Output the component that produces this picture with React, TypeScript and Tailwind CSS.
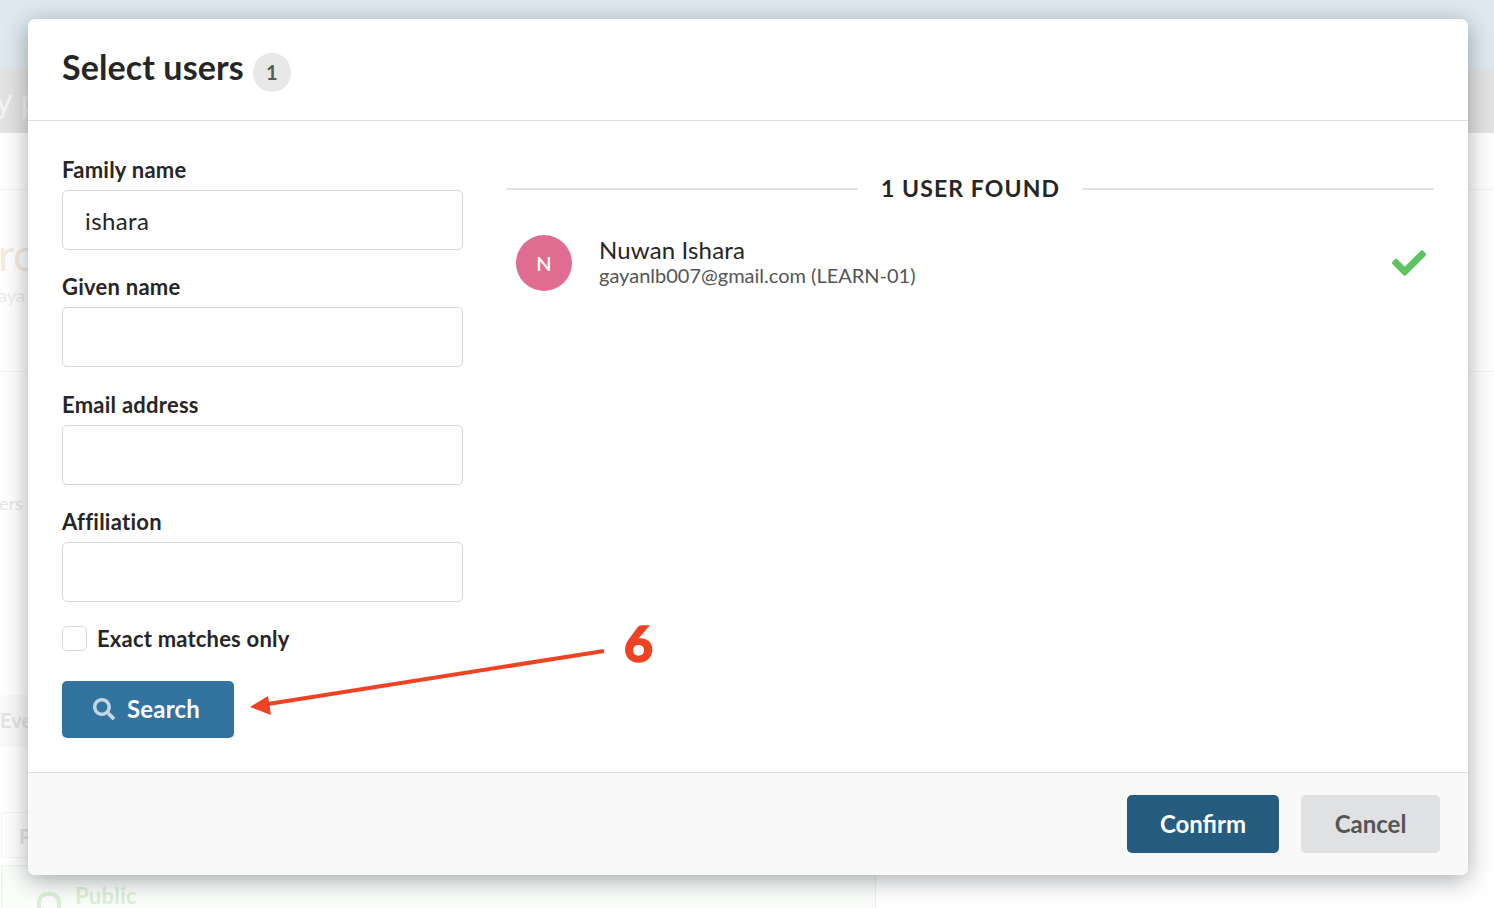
import { FaSearch, FaCheck } from "react-icons/fa";

const fields = [
  { label: "Family name", value: "ishara" },
  { label: "Given name", value: "" },
  { label: "Email address", value: "" },
  { label: "Affiliation", value: "" },
];

function BackgroundPage() {
  return (
    <div className="h-[908px] overflow-hidden bg-white text-[#d9d9d9]">
      <div className="h-[68px] bg-[#dfe9f0]" />
      <div className="h-[65px] bg-[#e3e3e3] pt-[12px] text-[34px] leading-[40px] text-[#f4f4f4]">
        <span className="-ml-[5px] block">y p</span>
      </div>
      <div className="h-[57px] border-b border-[#f4f4f4]" />
      <div className="h-[182px] border-b border-[#f6f6f6] pt-[38px]">
        <div className="-ml-[2px] text-[44px] leading-[52px] text-[#f5ebe2]">rc</div>
        <div className="-ml-[2px] mt-[3px] text-[18px] leading-[24px] text-[#ececec]">aya</div>
      </div>
      <div className="h-[323px] pt-[119px]">
        <div className="-ml-[1px] text-[18px] leading-[24px] text-[#e8e8e8]">ers</div>
      </div>
      <div className="h-[52px] w-[60px] rounded-l bg-[#fafafa] pt-[11px] text-[20px] font-bold leading-[28px] text-[#e4e4e4]">
        Eve
      </div>
      <div className="ml-[1px] mt-[65px] flex w-[875px] flex-col">
        <div className="h-[46px] rounded border border-[#f5f5f5] pl-[17px] pt-[8px] text-[20px] font-bold text-[#e4e4e4]">P</div>
        <div className="mt-[7px] flex h-[60px] gap-[14px] rounded border border-[#e9f3e7] bg-[#fbfdfa] pl-[35px] pt-[19px]">
          <div className="mt-[7px] h-[30px] w-[24px] rounded-t-[10px] border-[4px] border-[#dcefd8]" />
          <span className="text-[22px] font-bold leading-[22px] tracking-[0.3px] text-[#dcefd8]">Public</span>
        </div>
      </div>
    </div>
  );
}

function Field({ label, value }: { label: string; value: string }) {
  return (
    <div className="flex flex-col">
      <label className="h-[36px] text-[22px] font-bold leading-[31px] tracking-[0.25px] text-[#262626]">{label}</label>
      <input
        readOnly
        value={value}
        className="h-[60px] w-[401px] rounded-[5px] border border-[#d9d9d9] bg-white px-[22px] text-[24px] tracking-[0.4px] text-[#262626]"
      />
    </div>
  );
}

export default function App() {
  return (
    <div className="relative h-[908px] w-[1494px] overflow-hidden font-['Lato','Liberation_Sans',sans-serif]">
      <BackgroundPage />

      <div className="absolute left-[28px] top-[19px] flex h-[856px] w-[1440px] flex-col rounded-[7px] bg-white shadow-[0_5px_25px_rgba(20,30,40,0.38)]">
        <header className="flex h-[102px] items-start gap-[9px] border-b border-[#dedede] pl-[34px] pt-[26px]">
          <h1 className="text-[34px] font-bold leading-[44px] tracking-[0.1px] text-[#262626]">Select users</h1>
          <span className="mt-[8px] flex h-[39px] w-[38px] items-center justify-center rounded-full bg-[#e8e8e8] pb-[1px] text-[20px] font-bold text-[#5a5a5a]">
            1
          </span>
        </header>

        <div className="flex flex-1 px-[34px]">
          <form className="flex w-[401px] flex-col pt-[33px]">
            <div className="flex flex-col gap-[21.33px]">
              {fields.map((field) => (
                <Field key={field.label} label={field.label} value={field.value} />
              ))}
            </div>
            <label className="mt-[25px] flex h-[24px] items-center gap-[10px] text-[22px] font-bold tracking-[0.2px] text-[#262626]">
              <span className="h-[25px] w-[25px] rounded-[5px] border border-[#d9d9d9] bg-white" />
              Exact matches only
            </label>
            <button
              type="button"
              className="mt-[30px] flex h-[57px] w-[172px] items-center gap-[12px] rounded-[5px] bg-[#32739f] pl-[31px] text-[24px] font-bold tracking-[0.2px] text-white"
            >
              <FaSearch size={22} className="text-[#c5d7e3]" />
              Search
            </button>
          </form>

          <div className="ml-[44px] flex-1 pt-[51px]">
            <div className="flex items-center gap-[23px]">
              <div className="h-[2px] flex-1 bg-[#e2e2e2]" />
              <span className="-translate-y-[1px] text-[23px] font-bold leading-[34px] tracking-[1.1px] text-[#262626]">1 USER FOUND</span>
              <div className="h-[2px] flex-1 bg-[#e2e2e2]" />
            </div>
            <div className="mt-[29px] flex items-center pl-[9px] pr-[8px]">
              <div className="flex h-[56px] w-[56px] items-center justify-center rounded-full bg-[#e06c92] pb-[1px] text-[20px] font-semibold text-white">
                N
              </div>
              <div className="ml-[27px] flex-1 -translate-y-[1px]">
                <div className="text-[24px] leading-[27px] tracking-[0.15px] text-[#262626]">Nuwan Ishara</div>
                <div className="text-[20px] leading-[25px] text-[#555555]">gayanlb007@gmail.com (LEARN-01)</div>
              </div>
              <FaCheck size={34} className="text-[#5cc35f]" />
            </div>
          </div>
        </div>

        <footer className="flex h-[103px] items-start justify-end gap-[22px] rounded-b-[7px] border-t border-[#dedede] bg-[#f9f9f9] pr-[28px] pt-[22px]">
          <button type="button" className="h-[58px] w-[152px] rounded-[5px] bg-[#265c80] text-[24px] font-bold text-white">
            Confirm
          </button>
          <button type="button" className="h-[58px] w-[139px] rounded-[5px] bg-[#e0e1e3] text-[24px] font-bold text-[#555555]">
            Cancel
          </button>
        </footer>
      </div>

      {/* annotation drawn over the modal */}
      <svg className="absolute left-0 top-0" width="1494" height="908" viewBox="0 0 1494 908" fill="none">
        <line x1="604" y1="651" x2="268" y2="704" stroke="#ee4323" strokeWidth="4" />
        <polygon points="250,707 268,696 271,715" fill="#ee4323" />
      </svg>
      <span className="absolute left-[624px] top-[613px] text-[50px] font-black leading-[60px] text-[#ee4323] [-webkit-text-stroke:1.5px_#ee4323]">6</span>
    </div>
  );
}
